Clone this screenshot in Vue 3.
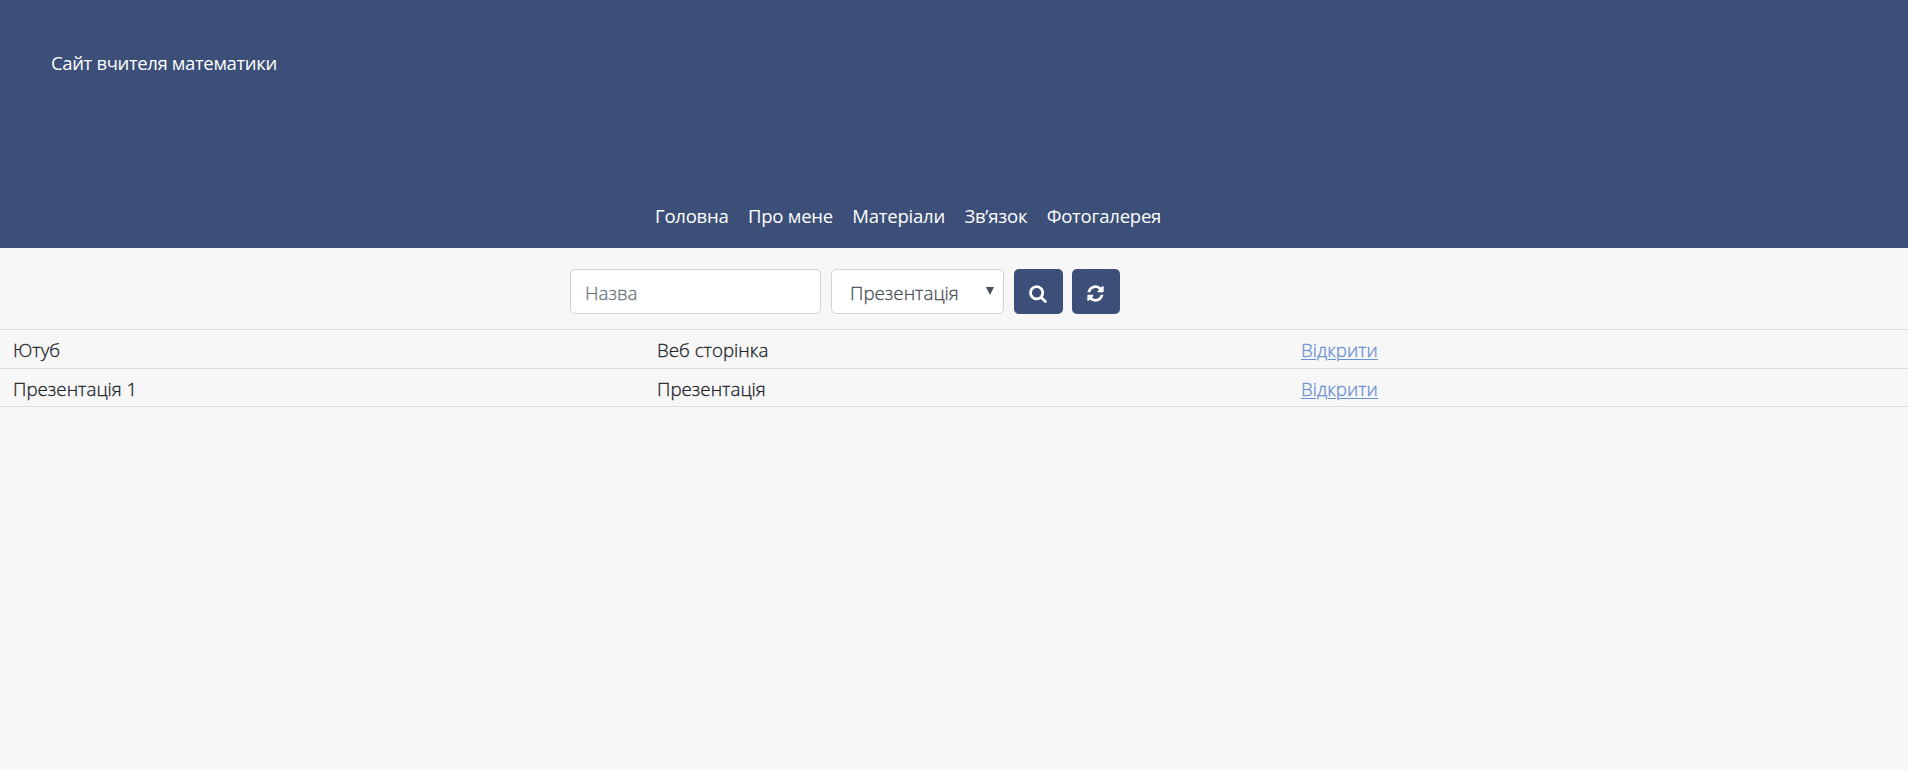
<script setup>
import { ref } from 'vue'

const menu = ['Головна', 'Про мене', 'Матеріали', 'Зв’язок', 'Фотогалерея']
const name = ref('')
const rows = [
  { title: 'Ютуб', type: 'Веб сторінка' },
  { title: 'Презентація 1', type: 'Презентація' },
]
</script>

<template>
  <div class="page">
    <header class="header">
      <div class="brand">Сайт вчителя математики</div>
      <nav class="menu">
        <a v-for="item in menu" :key="item" class="menu-item">{{ item }}</a>
      </nav>
    </header>
    <form class="filter" @submit.prevent>
      <input v-model="name" class="field" type="text" placeholder="Назва" />
      <div class="select">
        <span class="select-text">Презентація</span>
        <svg class="arrow" width="8" height="8" viewBox="0 0 8 8"><path d="M0 0h8L4 8z" fill="#495057" /></svg>
      </div>
      <button class="btn" type="button" aria-label="Пошук">
        <svg width="18" height="19" viewBox="0 0 1664 1792"><path fill="#fff" d="M1152 832q0-185-131.500-316.500T704 384 387.500 515.500 256 832t131.500 316.500T704 1280t316.500-131.500T1152 832zm512 832q0 52-38 90t-90 38q-54 0-90-38l-343-342q-179 124-399 124-143 0-273.500-55.500t-225-150-150-225T0 832t55.500-273.500 150-225 225-150T704 128t273.500 55.500 225 150 150 225T1408 832q0 220-124 399l343 343q37 37 37 90z" /></svg>
      </button>
      <button class="btn btn-last" type="button" aria-label="Оновити">
        <svg width="17" height="19" viewBox="0 0 1536 1792"><path fill="#fff" d="M1511 1056q0 5-1 7-64 268-268 434.500T764 1664q-146 0-282.500-55T238 1452l-129 129q-19 19-45 19t-45-19-19-45v-448q0-26 19-45t45-19h448q26 0 45 19t19 45-19 45l-137 137q71 66 161 102t187 36q134 0 250-65t186-179q11-17 53-117 8-23 30-23h192q13 0 22.500 9.500t9.500 22.500zm25-800v448q0 26-19 45t-45 19h-448q-26 0-45-19t-19-45 19-45l138-138Q969 384 768 384q-134 0-250 65T332 628q-11 17-53 117-8 23-30 23H50q-13 0-22.500-9.500T18 736v-7q65-268 270-434.500T768 128q146 0 284 55.500T1297 340l130-129q19-19 45-19t45 19 19 45z" /></svg>
      </button>
    </form>
    <div class="table">
      <div v-for="row in rows" :key="row.title" class="row">
        <div class="cell">{{ row.title }}</div>
        <div class="cell">{{ row.type }}</div>
        <div class="cell"><a class="link">Відкрити</a></div>
      </div>
    </div>
  </div>
</template>

<style>
body {
  margin: 0;
  background: #f7f7f7;
}
</style>

<style scoped>
.page {
  min-height: 770px;
  background: #f7f7f7;
  color: #212529;
  font-family: "Open Sans", "Noto Sans", sans-serif;
  font-size: 18.75px;
  font-weight: 300;
  line-height: 28px;
  -webkit-text-stroke-width: 0.3px;
}
.header {
  box-sizing: border-box;
  height: 248px;
  padding: 49px 0 18px 51px;
  display: flex;
  flex-direction: column;
  justify-content: space-between;
  background: #3b4f79;
  color: #fff;
  font-size: 18.5px;
  font-weight: 400;
  -webkit-text-stroke-width: 0;
}
.brand {
  letter-spacing: -0.36px;
}
.menu {
  display: flex;
  gap: 19.4px;
  padding-left: 604px;
  letter-spacing: -0.22px;
}
.filter {
  display: flex;
  gap: 10px;
  height: 45px;
  padding: 21px 0 15px 570px;
}
.field,
.select {
  box-sizing: border-box;
  height: 45px;
  border: 1px solid #ced4da;
  border-radius: 5px;
  background: #fff;
  color: #495057;
}
.field {
  width: 251px;
  padding: 3px 14px 1px;
  font: inherit;
  outline: none;
}
.field::placeholder {
  color: #6c757d;
  opacity: 1;
}
.select {
  width: 173px;
  display: flex;
  justify-content: space-between;
  padding: 9px 9px 0 18px;
}
.arrow {
  margin-top: 8px;
}
.btn {
  width: 49px;
  height: 45px;
  display: flex;
  align-items: center;
  justify-content: center;
  padding: 3px 1px 0 0;
  border: 0;
  border-radius: 5px;
  background: #3b4f79;
}
.btn-last {
  width: 48px;
  margin-left: -1px;
}
.row {
  box-sizing: border-box;
  height: 39px;
  display: grid;
  grid-template-columns: 644px 644px 1fr;
  border-top: 1px solid #dcdddf;
}
.row:last-child {
  border-bottom: 1px solid #dcdddf;
}
.cell {
  padding: 6px 13px 0;
}
.link {
  color: #6a8fd2;
  text-decoration: underline;
  text-decoration-thickness: 1px;
  text-underline-offset: 2px;
}
</style>
